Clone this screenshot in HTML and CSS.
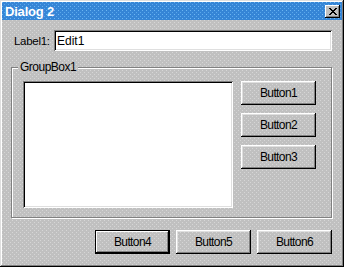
FILE: index.html
```html
<!DOCTYPE html>
<html lang="en">
<head>
    <meta charset="UTF-8">
    <title>Dialog 2</title>
    <link rel="stylesheet" href="styles.css">
</head>
<body>
    <div class="dialog">
        <div class="titlebar">
            <span class="title">Dialog 2</span>
            <button class="close-btn" aria-label="Close">
                <svg width="8" height="7" viewBox="0 0 8 7">
                    <path d="M0 0h2v1h-2zM6 0h2v1h-2zM1 1h2v1h-2zM5 1h2v1h-2zM2 2h4v1h-4zM3 3h2v1h-2zM2 4h4v1h-4zM1 5h2v1h-2zM5 5h2v1h-2zM0 6h2v1h-2zM6 6h2v1h-2z" fill="#000"/>
                </svg>
            </button>
        </div>

        <div class="content">
            <div class="edit-row">
                <label for="edit1">Label1:</label>
                <input type="text" id="edit1" class="edit" value="Edit1">
            </div>

            <!-- Group box -->
            <div class="group">
                <span class="group-caption">GroupBox1</span>
                <div class="listbox"></div>
                <div class="side-buttons">
                    <button class="btn">Button1</button>
                    <button class="btn">Button2</button>
                    <button class="btn">Button3</button>
                </div>
            </div>

            <div class="footer">
                <button class="btn default">Button4</button>
                <button class="btn">Button5</button>
                <button class="btn">Button6</button>
            </div>
        </div>
    </div>
</body>
</html>
```

FILE: styles.css
```css
body {
    margin: 0;
    font-family: "Liberation Sans", Arial, sans-serif;
    font-size: 11px;
    color: #000;
}

/* dotted grey face */
.dialog,
.group-caption,
.btn {
    background-color: #c0c0c0;
    background-image:
        conic-gradient(at 1px 1px, transparent 75%, #d6d6d6 0),
        conic-gradient(at 1px 1px, transparent 75%, #d6d6d6 0);
    background-size: 4px 4px, 4px 4px;
    background-position: 0 0, 2px 2px;
    background-attachment: fixed;
}

.dialog {
    width: 344px;
    height: 267px;
    box-sizing: border-box;
    padding: 2px;
    box-shadow:
        inset -1px -1px #000,
        inset 1px 1px #dfdfdf,
        inset -2px -2px #808080,
        inset 2px 2px #fff;
}

.titlebar {
    height: 18px;
    display: flex;
    align-items: center;
    justify-content: space-between;
    padding: 0 2px 0 3px;
    background-color: #3585d6;
    background-image:
        conic-gradient(at 1px 1px, transparent 75%, #6cb6f2 0),
        conic-gradient(at 1px 1px, transparent 75%, #5aa8ec 0);
    background-size: 4px 4px, 4px 4px;
    background-position: 0 0, 2px 2px;
}

.title {
    color: #fff;
    font-weight: bold;
    font-size: 13px;
    letter-spacing: -0.2px;
}

.close-btn {
    width: 15px;
    height: 13px;
    padding: 0;
    border: none;
    background: #c0c0c0;
    display: flex;
    align-items: center;
    justify-content: center;
    box-shadow:
        inset -1px -1px #000,
        inset 1px 1px #fff,
        inset -2px -2px #808080;
}

.content {
    padding: 10px 9px 0 9px;
}

.edit-row {
    display: flex;
    align-items: center;
}

.edit-row label {
    width: 40px;
    margin-left: 3px;
    font-size: 11.5px;
    letter-spacing: -0.3px;
}

.edit {
    flex: 1;
    height: 21px;
    margin: 0 1px 0 0;
    box-sizing: border-box;
    padding: 2px 3px;
    border: none;
    background: #fff;
    font-family: inherit;
    font-size: 12px;
    box-shadow:
        inset 1px 1px #808080,
        inset -1px -1px #fff,
        inset 2px 2px #000,
        inset -2px -2px #dfdfdf;
    outline: none;
}

.group {
    position: relative;
    margin-top: 16px;
    height: 151px;
    width: 321px;
    box-sizing: border-box;
    border: 1px solid #808080;
    box-shadow: inset 1px 1px #fff, 1px 1px #fff;
    display: flex;
    padding: 13px 0 0 11px;
    gap: 8px;
}

.group-caption {
    position: absolute;
    top: -8px;
    left: 6px;
    padding: 0 2px;
    font-size: 12px;
    letter-spacing: -0.5px;
    line-height: 14px;
}

.listbox {
    width: 210px;
    height: 127px;
    box-sizing: border-box;
    background: #fff;
    box-shadow:
        inset 1px 1px #808080,
        inset -1px -1px #fff,
        inset 2px 2px #000,
        inset -2px -2px #dfdfdf;
}

.side-buttons {
    display: flex;
    flex-direction: column;
    gap: 8px;
}

.btn {
    width: 75px;
    height: 24px;
    padding: 0;
    border: none;
    font-family: inherit;
    font-size: 12px;
    letter-spacing: -0.6px;
    color: #000;
    box-shadow:
        inset -1px -1px #000,
        inset 1px 1px #fff,
        inset -2px -2px #808080,
        inset 2px 2px #dfdfdf;
}

.btn.default {
    box-shadow:
        inset 0 0 0 1px #000,
        inset -2px -2px #000,
        inset 2px 2px #fff,
        inset -3px -3px #808080;
}

.footer {
    margin-top: 12px;
    display: flex;
    justify-content: flex-end;
    gap: 6px;
    padding-right: 1px;
}
```
